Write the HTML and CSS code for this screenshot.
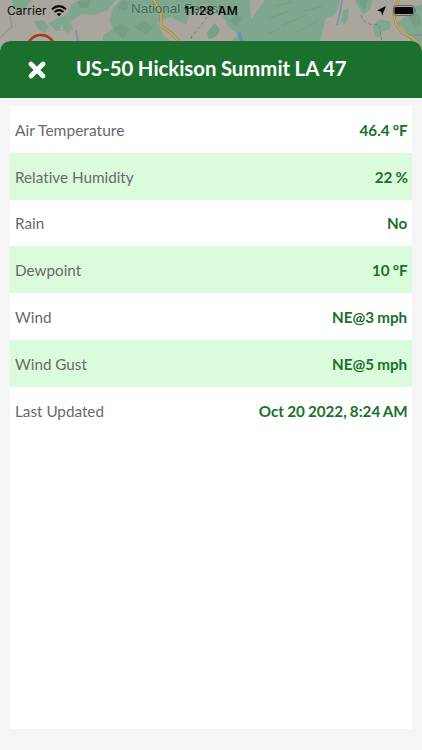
FILE: index.html
```html
<!DOCTYPE html>
<html lang="en">
<head>
<meta charset="utf-8">
<title>Weather station</title>
<link rel="stylesheet" href="styles.css">
</head>
<body>
<div class="screen">
  <svg class="map" viewBox="0 0 422 60" width="422" height="60" aria-hidden="true">
    <rect width="422" height="60" fill="#aaa69d"/>
    <g fill="#7fa78d">
      <path d="M12 0H31L25 9L15 11Z"/>
      <path d="M48 23L57 19L68 14L72 4L80 0H116L108 10L94 15L82 14L73 20L64 25L53 27Z"/>
      <path d="M34 21L43 20L49 27L45 33L38 29Z"/>
      <path d="M52 24L60 23L61 31L55 31Z"/>
      <path d="M63 24L71 22L73 29L69 33L63 31Z"/>
      <path d="M103 35L113 29L109 21L113 8L121 0H250L251 21L242 30L228 25L218 9L204 4L190 14L186 25L171 17L157 22L163 35L171 42H103Z"/>
      <path d="M229 27L239 20L251 20L260 7L265 0H340L336 16L326 26L321 42H231L238 34Z"/>
      <path d="M355 0H373L370 9L363 15L357 8Z"/>
      <path d="M397 23L406 16L413 7L422 4V42H411L404 29Z"/>
    </g>
    <path d="M190 14L204 7L214 12L222 23L232 29L236 36L230 42H184L175 34L162 25L171 18L186 25Z" fill="#aaa69d"/>
    <path d="M207 33L215 23L220 30L216 37L209 39Z" fill="#75a184"/>
    <path d="M326 18L335 15L341 0H354L364 16L373 26L374 42H320L323 28Z" fill="#aaa69d"/>
    <path d="M343 10L349 8L348 19L344 25L341 21ZM373 25L381 19L391 22L390 29L381 32L382 38L375 36Z" fill="#7fa78d"/>
    <g fill="#6f9c7f" opacity=".7">
      <path d="M77 1L91 0L88 8L80 8Z"/>
      <path d="M117 8L122 0L130 3L126 11Z"/>
      <path d="M113 29L121 23L129 29L124 39L118 35Z"/>
      <path d="M134 27L144 20L153 27L147 35Z"/>
      <path d="M229 21L236 14L242 18L237 27Z"/>
      <path d="M357 0H368L365 10Z"/>
      <path d="M409 16L418 13L422 23L414 28Z"/>
    </g>
    <g fill="none" stroke="#699779" stroke-width="1.5" opacity=".35">
      <path d="M275 6L292 2M269 18L289 11M281 26L307 14M297 32L318 21M304 11L322 6M267 34L279 29"/>
    </g>
    <g fill="none" stroke="#899294" stroke-width="1">
      <path d="M10 16L12 27L0 38M121 1L118 14"/>
      <path d="M210 12L202 24L192 36L190 42M361 15Q365 27 379 24L382 41" stroke-dasharray="3 3" stroke="#777c78"/>
    </g>
    <g fill="none" stroke="#718fb0" stroke-width="1.5">
      <path d="M76 30L78 42M342 0L341 8L337 25"/>
      <path d="M239 32L242 42" stroke-width="3"/>
      <path d="M414 35H422"/>
    </g>
    <g fill="none" stroke="#a18b4a" stroke-width="3">
      <path d="M154 0L161 14L161 26L171 33L180 42M399 0L394 12Q393 23 403 33L413 38L420 45"/>
      <path d="M154 0L161 14L161 26L171 33L180 42M399 0L394 12Q393 23 403 33L413 38L420 45" stroke="#c6ad69" stroke-width="1.5"/>
    </g>
    <circle cx="41" cy="49" r="14" fill="none" stroke="#a63c14" stroke-width="2.7"/>
    <circle cx="273" cy="42" r="3" fill="none" stroke="#929994"/>
    <text class="forest" x="131" y="13" textLength="91" lengthAdjust="spacingAndGlyphs">National Forest</text>
  </svg>
  <header class="status">
    <span class="carrier">Carrier</span>
    <svg class="wifi" viewBox="0 0 16 12" width="16" height="12" fill="none" stroke="#080808" stroke-width="2.2">
      <path d="M1 4.3Q8-1.9 15 4.3M3.6 7Q8 3.1 12.4 7"/>
      <path d="M8 11.3L5.7 9Q8 7.1 10.3 9Z" fill="#080808" stroke="none"/>
    </svg>
    <span class="time">11:28 AM</span>
    <svg class="device" viewBox="0 0 46 14" width="46" height="14">
      <path d="M15 2L11.2 11.5L10 7.5L6 6.5Z" fill="#050505"/>
      <rect x="22.5" y="1.5" width="20.5" height="10" rx="2.8" fill="none" stroke="#626464"/>
      <rect x="23.5" y="3" width="18.5" height="7" rx="1.5" fill="#050505"/>
      <path d="M44 4.8Q46 6.5 44 8.2Z" fill="#626464"/>
    </svg>
  </header>
  <main class="sheet">
    <div class="titlebar">
      <svg class="close" viewBox="0 0 18 18" width="18" height="18"><path d="M3 3L15 15M15 3L3 15" fill="none" stroke="#fff" stroke-width="4.6" stroke-linecap="round"/></svg>
      <h1 class="title">US-50 Hickison Summit LA 47</h1>
    </div>
    <dl class="readings">
      <div class="row"><dt>Air Temperature</dt><dd>46.4 °F</dd></div>
      <div class="row"><dt>Relative Humidity</dt><dd>22 %</dd></div>
      <div class="row"><dt>Rain</dt><dd>No</dd></div>
      <div class="row"><dt>Dewpoint</dt><dd>10 °F</dd></div>
      <div class="row"><dt>Wind</dt><dd>NE@3 mph</dd></div>
      <div class="row"><dt>Wind Gust</dt><dd>NE@5 mph</dd></div>
      <div class="row"><dt>Last Updated</dt><dd>Oct 20 2022, 8:24 AM</dd></div>
    </dl>
  </main>
</div>
</body>
</html>
```
FILE: styles.css
```css
* { box-sizing: border-box; }
body { margin: 0; font-family: Lato, sans-serif; }
.screen { position: relative; width: 422px; height: 750px; overflow: hidden; display: flex; flex-direction: column; }
.map { position: absolute; top: 0; left: 0; }
.forest { font: 400 13.5px "Liberation Sans", sans-serif; fill: #356b50; stroke: #9fb5a4; stroke-width: .8px; paint-order: stroke; }
.status { position: relative; flex: 0 0 41px; height: 41px; padding: 4px 5px 0 7px; display: grid; grid-template-columns: 39px 1fr 54px 1fr 46px; column-gap: 5px; align-items: start; font: 12px/14px Inter, sans-serif; color: #090909; white-space: nowrap; }
.carrier { letter-spacing: .05px; }
.wifi { margin-top: 1px; }
.time { position: absolute; left: 184px; top: 4px; font-weight: 600; font-size: 12px; letter-spacing: .25px; }
.device { grid-column: 5; }
.sheet { position: relative; flex: 1; display: flex; flex-direction: column; background: #f5f5f5; border-radius: 10px 10px 0 0; overflow: hidden; }
.titlebar { flex: 0 0 57px; display: flex; align-items: center; padding: 0 28px; background: #1a702c; }
.close { flex: none; }
.title { margin: 0 0 3px 30px; font-size: 21px; line-height: 26px; font-weight: 700; color: #fff; white-space: nowrap; word-spacing: -.5px; transform: scaleX(.968); transform-origin: left; }
.readings { flex: 1; margin: 8px 10px 21px; background: #fff; }
.row { height: 46.8px; padding: 1px 4.5px 0; display: flex; align-items: center; justify-content: space-between; font-size: 16px; line-height: 20px; font-variant-ligatures: none; }
.row:nth-child(even) { background: #dbfcdc; }
dt { color: #696969; transform: scaleX(.953); transform-origin: left; }
.row:first-child dt { transform: scaleX(.973); }
dd { margin: 0; font-weight: 700; color: #1a702c; word-spacing: -.6px; transform: scaleX(.95); transform-origin: right; }
```
